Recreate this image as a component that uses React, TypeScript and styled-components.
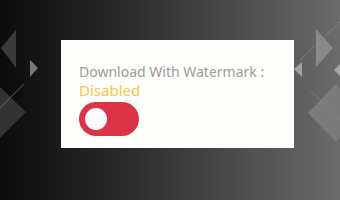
import React from 'react';
import styled, { createGlobalStyle } from 'styled-components';

const GlobalStyle = createGlobalStyle`
  html, body {
    margin: 0;
    padding: 0;
  }
  body {
    font-family: 'Noto Sans', 'Open Sans', sans-serif;
  }
`;

const Page = styled.div`
  position: relative;
  width: 340px;
  height: 200px;
  overflow: hidden;
  background: linear-gradient(90deg, #0b0b0b 0%, #2e2e2e 40%, #6b6b6b 100%);
  box-sizing: border-box;
  padding: 40px 46px 0 61px;
`;

const Decor = styled.svg`
  position: absolute;
  inset: 0;
  width: 340px;
  height: 200px;
`;

const Card = styled.div`
  position: relative;
  width: 233px;
  height: 108px;
  box-sizing: border-box;
  background: #fefefa;
  padding: 22px 18px 0 18px;
  display: flex;
  flex-direction: column;
  align-items: flex-start;
`;

const Label = styled.div`
  font-size: 14px;
  line-height: 19px;
  color: #9b9b9b;
  white-space: nowrap;
`;

const Status = styled.div<{ $on: boolean }>`
  font-size: 15px;
  line-height: 19px;
  color: ${({ $on }) => ($on ? '#3fae5a' : '#f3c544')};
`;

const Toggle = styled.button<{ $on: boolean }>`
  margin-top: 2px;
  width: 60px;
  height: 34px;
  border: none;
  border-radius: 17px;
  padding: 0 6px;
  background: #dc3346;
  display: flex;
  align-items: center;
  justify-content: ${({ $on }) => ($on ? 'flex-end' : 'flex-start')};
  cursor: pointer;
`;

const Knob = styled.span`
  width: 22px;
  height: 22px;
  border-radius: 50%;
  background: #ffffff;
`;

const Background = () => (
  <Decor viewBox="0 0 340 200">
    <polygon points="16,30 16,68 1,48" fill="#3b3b3b" />
    <polygon points="30,60 38,68 30,77" fill="#777" />
    <polygon points="-20,110 0,87 26,112 0,138" fill="#333" />
    <line x1="24" y1="84" x2="0" y2="108" stroke="#666" strokeWidth="0.8" />
    <polygon points="316,29 333,48 316,67" fill="#8a8a8a" />
    <polygon points="302,62 294,69 302,77" fill="#a0a0a0" />
    <polygon points="340,64 334,70 340,76" fill="#a5a5a5" />
    <polygon points="308,113 336,84 360,113 336,142" fill="#7b7b7b" />
    <line x1="300" y1="60" x2="340" y2="22" stroke="#888" strokeWidth="0.8" />
    <line x1="310" y1="90" x2="340" y2="120" stroke="#8a8a8a" strokeWidth="0.6" />
  </Decor>
);

export default function App() {
  const [on, setOn] = React.useState(false);
  return (
    <>
      <GlobalStyle />
      <Page>
        <Background />
        <Card>
          <Label>Download With Watermark :</Label>
          <Status $on={on}>{on ? 'Enabled' : 'Disabled'}</Status>
          <Toggle $on={on} onClick={() => setOn(!on)} aria-label="Toggle watermark">
            <Knob />
          </Toggle>
        </Card>
      </Page>
    </>
  );
}
